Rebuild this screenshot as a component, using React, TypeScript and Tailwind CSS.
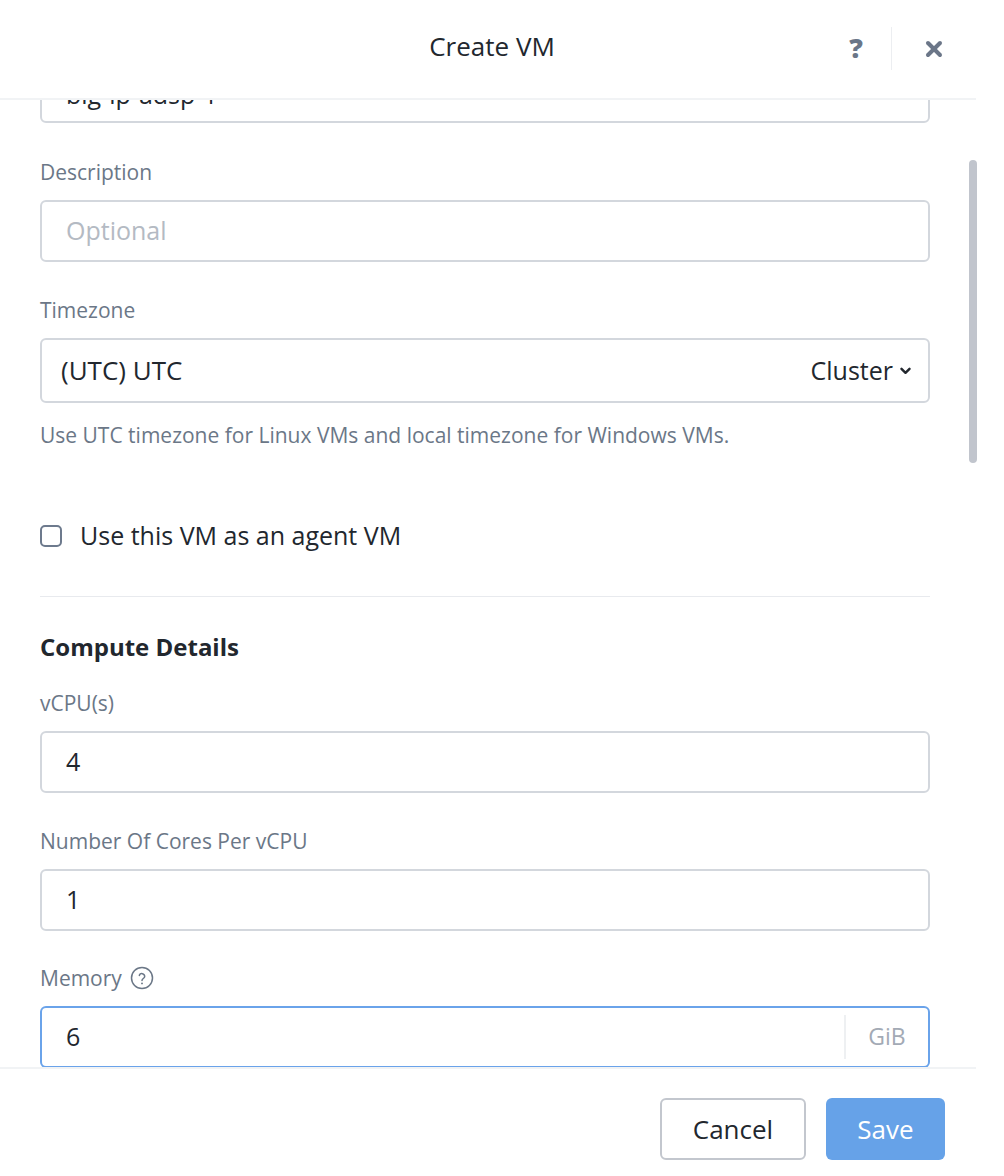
import { X } from 'lucide-react';

const font = { fontFamily: '"Open Sans", Lato, sans-serif' };

function Label({ children }: { children: React.ReactNode }) {
  return <div className="text-[21px] leading-[24px] text-[#6b7787] mb-4">{children}</div>;
}

function Field({ value, placeholder }: { value?: string; placeholder?: string }) {
  return (
    <div className="h-[62px] rounded-md border-2 border-[#d3d7dd] flex items-center px-6">
      {value ? (
        <span className="text-[25px] text-[#22272e]">{value}</span>
      ) : (
        <span className="text-[25px] text-[#b4bac3]">{placeholder}</span>
      )}
    </div>
  );
}

export default function App() {
  return (
    <div className="w-[1004px] h-[1176px] bg-white flex flex-col relative overflow-hidden" style={font}>
      {/* Header */}
      <div className="h-[100px] shrink-0 relative flex items-center justify-center pr-[20px]">
        <h1 className="text-[26px] text-[#22272e] -mt-[8px]">Create VM</h1>
        <div className="absolute right-[58px] top-[27px] flex items-center h-[43px]">
          <span className="text-[27px] font-extrabold text-[#6b7688] mr-[28px]">?</span>
          <div className="w-px h-[43px] bg-[#eceef1]" />
          <X className="w-[24px] h-[24px] text-[#6b7688] ml-[30px]" strokeWidth={4} />
        </div>
        <div className="absolute left-0 bottom-0 w-[976px] h-[2px] bg-[#f1f3f5]" />
      </div>

      {/* Body */}
      <div className="flex-1 overflow-hidden relative">
        <div className="pl-10 w-[930px] -mt-[39px]">
          <div className="h-[62px] rounded-md border-2 border-[#d3d7dd] flex items-end px-6 pb-[12px]">
            <span className="text-[25px] leading-[30px] text-[#22272e]">big-ip-adsp-1</span>
          </div>

          <div className="mt-[37px]">
            <Label>Description</Label>
            <Field placeholder="Optional" />
          </div>

          <div className="mt-[36px]">
            <Label>Timezone</Label>
            <div className="h-[65px] rounded-md border-2 border-[#d3d7dd] flex items-center justify-between pl-[19px] pr-[17px]">
              <span className="text-[26px] text-[#22272e]">(UTC) UTC</span>
              <span className="flex items-center gap-[7px] text-[25px] text-[#22272e]">
                Cluster
                <svg width="11" height="8" viewBox="0 0 11 8" fill="none">
                  <path d="M1.5 1.8 L5.5 5.8 L9.5 1.8" stroke="#22272e" strokeWidth="2.4" strokeLinecap="round" strokeLinejoin="round" />
                </svg>
              </span>
            </div>
            <p className="text-[21px] leading-[24px] text-[#6b7787] mt-[20px]">
              Use UTC timezone for Linux VMs and local timezone for Windows VMs.
            </p>
          </div>

          <label className="flex items-center gap-[18px] mt-[70px]">
            <span className="w-[22px] h-[22px] rounded-[5px] border-2 border-[#6d7a8d]" />
            <span className="text-[25px] text-[#22272e]">Use this VM as an agent VM</span>
          </label>

          <div className="h-px bg-[#e8eaee] mt-[41px]" />

          <h2 className="text-[24px] leading-[30px] font-bold text-[#22272e] mt-[35px]">Compute Details</h2>

          <div className="mt-[29px]">
            <Label>vCPU(s)</Label>
            <Field value="4" />
          </div>

          <div className="mt-[36px]">
            <Label>Number Of Cores Per vCPU</Label>
            <Field value="1" />
          </div>

          <div className="mt-[35px]">
            <div className="flex items-center gap-[8px] h-[24px] text-[21px] leading-[24px] text-[#6b7787] mb-4">
              Memory
              <svg width="24" height="24" viewBox="0 0 24 24" fill="none">
                <circle cx="12" cy="12" r="10.5" stroke="#6b7787" strokeWidth="1.5" />
                <path d="M9.3 9.4a2.8 2.8 0 0 1 5.4 1c0 1.9-2.7 2.3-2.7 4" stroke="#6b7787" strokeWidth="1.5" strokeLinecap="round" fill="none" />
                <circle cx="12" cy="17.4" r="0.95" fill="#6b7787" />
              </svg>
            </div>
            <div className="h-[62px] rounded-md border-2 border-[#6aa3ea] flex items-center">
              <span className="flex-1 pl-6 text-[25px] text-[#22272e]">6</span>
              <div className="w-[2px] h-[44px] bg-[#eef0f2]" />
              <span className="w-[82px] text-center text-[23px] text-[#a3aab5]">GiB</span>
            </div>
          </div>
        </div>

        {/* scrollbar thumb */}
        <div className="absolute left-[969px] top-[60px] w-[8px] h-[303px] rounded-full bg-[#c1c5cd]" />
      </div>

      {/* Footer */}
      <div className="h-[109px] shrink-0 relative flex items-start justify-end pr-[59px] gap-5 pt-[31px]">
        <div className="absolute left-0 top-0 w-[976px] h-[2px] bg-[#f1f3f5]" />
        <button className="w-[146px] h-[62px] rounded-md border-2 border-[#c3c7ce] bg-white text-[26px] text-[#22272e]">
          Cancel
        </button>
        <button className="w-[119px] h-[62px] rounded-md bg-[#66a2e8] text-[26px] text-white">
          Save
        </button>
      </div>
    </div>
  );
}
